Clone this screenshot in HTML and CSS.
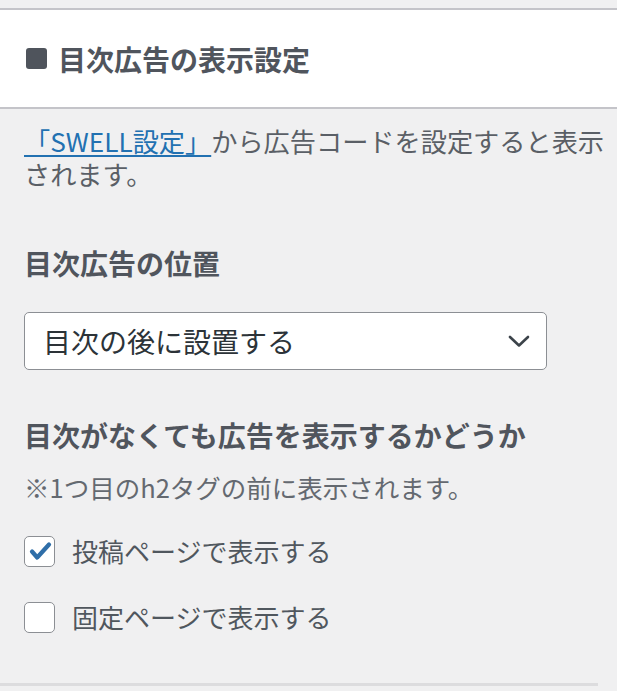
FILE: index.html
```html
<!DOCTYPE html>
<html lang="ja">
<head>
  <meta charset="UTF-8" />
  <meta name="viewport" content="width=device-width, initial-scale=1.0"/>
  <title>目次広告の表示設定</title>
  <link rel="stylesheet" href="styles.css">
</head>
<body>

<div class="top-gap"></div>

<div class="panel-header">
  <span class="panel-mark"></span>
  <h2 class="panel-title">目次広告の表示設定</h2>
</div>

<div class="panel-body">
  <p class="note"><a href="#" class="note-link">「SWELL設定」</a>から広告コードを設定すると表示されます。</p>

  <h3 class="field-title">目次広告の位置</h3>
  <div class="select">
    <span class="select-value">目次の後に設置する</span>
    <svg class="select-arrow" width="22" height="13" viewBox="0 0 22 13">
      <polyline points="2,2 11,10.5 20,2" fill="none" stroke="#3c434a" stroke-width="2.6" stroke-linecap="round" stroke-linejoin="round"/>
    </svg>
  </div>

  <h3 class="field-title field-title-second">目次がなくても広告を表示するかどうか</h3>
  <p class="field-desc">※1つ目のh2タグの前に表示されます。</p>

  <div class="checks">
    <label class="check-row">
      <span class="check-box">
        <svg width="31" height="31" viewBox="0 0 31 31">
          <path d="M8 16.5 L13.2 22.5 L25 9.5" fill="none" stroke="#2f6ea8" stroke-width="4.2" stroke-linecap="round" stroke-linejoin="round"/>
        </svg>
      </span>
      <span class="check-label">投稿ページで表示する</span>
    </label>
    <label class="check-row">
      <span class="check-box"></span>
      <span class="check-label">固定ページで表示する</span>
    </label>
  </div>
</div>

<div class="panel-footer-line"></div>

</body>
</html>
```

FILE: styles.css
```css
body {
  margin: 0;
  background-color: #f0f0f1;
  color: #50575e;
  font-family: "Noto Sans CJK JP", "Noto Sans", sans-serif;
}

.top-gap {
  height: 8px;
}

.panel-header {
  display: flex;
  align-items: center;
  gap: 11px;
  height: 97px;
  padding-left: 26px;
  background-color: #fff;
  border-top: 2px solid #c4c4c9;
  border-bottom: 2px solid #c4c4c9;
}

.panel-mark {
  width: 21px;
  height: 21px;
  border-radius: 3px;
  background-color: #4f545c;
}

.panel-title {
  margin: 0;
  font-size: 28px;
  font-weight: 700;
  line-height: 36px;
  color: #50555d;
}

.panel-body {
  padding: 0 4px 0 24px;
}

.note {
  margin: 16px 0 0;
  font-size: 26.2px;
  line-height: 33px;
  color: #5a5f66;
}

.note-link {
  color: #2271b1;
  text-decoration: underline;
  text-underline-offset: 3px;
  text-decoration-thickness: 1.5px;
}

.field-title {
  margin: 54px 0 0;
  font-size: 28px;
  font-weight: 700;
  line-height: 36px;
  color: #50555d;
}

.field-title-second {
  margin-top: 47px;
}

.select {
  display: flex;
  align-items: center;
  justify-content: space-between;
  box-sizing: border-box;
  width: 523px;
  height: 58px;
  margin-top: 31px;
  padding: 0 16px 0 18px;
  background-color: #fff;
  border: 1.5px solid #8c8f94;
  border-radius: 5px;
}

.select-value {
  font-size: 28px;
  line-height: 36px;
  color: #2c3338;
}

.field-desc {
  margin: 18px 0 0;
  font-size: 25.5px;
  line-height: 32px;
  color: #646970;
}

.checks {
  display: flex;
  flex-direction: column;
  gap: 26px;
  margin-top: 28px;
}

.check-row {
  display: flex;
  align-items: center;
  gap: 17px;
  height: 40px;
}

.check-box {
  box-sizing: border-box;
  width: 31px;
  height: 31px;
  background-color: #fff;
  border: 1.5px solid #8c8f94;
  border-radius: 5px;
  position: relative;
}

.check-box svg {
  position: absolute;
  top: -1.5px;
  left: -1.5px;
}

.check-label {
  font-size: 26px;
  line-height: 36px;
  color: #50575e;
}

.panel-footer-line {
  width: 598px;
  height: 3px;
  margin-top: 46px;
  background-color: #dcdcde;
}
```
